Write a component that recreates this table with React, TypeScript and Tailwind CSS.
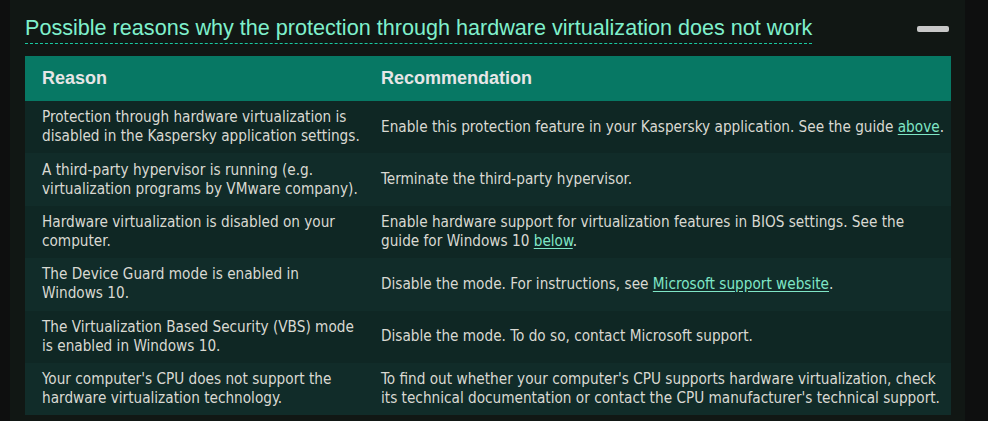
import React from 'react';

type Row = {
  reason: React.ReactNode;
  rec: React.ReactNode;
};

const Link: React.FC<{ children: React.ReactNode }> = ({ children }) => (
  <a href="#" className="text-[#7fe6c6] underline underline-offset-2">
    {children}
  </a>
);

const rows: Row[] = [
  {
    reason: 'Protection through hardware virtualization is disabled in the Kaspersky application settings.',
    rec: (
      <>
        Enable this protection feature in your Kaspersky application. See the guide <Link>above</Link>.
      </>
    ),
  },
  {
    reason: 'A third-party hypervisor is running (e.g. virtualization programs by VMware company).',
    rec: 'Terminate the third-party hypervisor.',
  },
  {
    reason: 'Hardware virtualization is disabled on your computer.',
    rec: (
      <>
        Enable hardware support for virtualization features in BIOS settings. See the
        <br />
        guide for Windows 10 <Link>below</Link>.
      </>
    ),
  },
  {
    reason: (
      <>
        The Device Guard mode is enabled in
        <br />
        Windows 10.
      </>
    ),
    rec: (
      <>
        Disable the mode. For instructions, see <Link>Microsoft support website</Link>.
      </>
    ),
  },
  {
    reason: (
      <>
        The Virtualization Based Security (VBS) mode
        <br />
        is enabled in Windows 10.
      </>
    ),
    rec: 'Disable the mode. To do so, contact Microsoft support.',
  },
  {
    reason: "Your computer's CPU does not support the hardware virtualization technology.",
    rec: "To find out whether your computer's CPU supports hardware virtualization, check its technical documentation or contact the CPU manufacturer's technical support.",
  },
];

const App: React.FC = () => {
  return (
    <div className="flex h-[421px] w-[988px] overflow-hidden bg-[#0e0f0f]">
      {/* left gutter */}
      <div className="w-[10px] shrink-0" />

      {/* content panel */}
      <div className="w-[955px] shrink-0 bg-[#111714] pl-[15px] pr-[14px] pt-[14px]">
        <div className="flex items-start justify-between">
          <h2
            className="border-b border-dashed border-[#19c9a0] pb-[1px] text-[21.6px] leading-[28px] text-[#7ff0cc]"
            style={{ fontFamily: '"Liberation Sans", Arial, sans-serif' }}
          >
            Possible reasons why the protection through hardware virtualization does not work
          </h2>
          <div className="mr-[2px] mt-[12px] h-[6px] w-[32px] rounded-[2px] bg-[#c8c8c8]" />
        </div>

        <table className="mt-[12px] w-full border-collapse">
          <thead>
            <tr
              className="h-[45px] bg-[#077864] text-left text-[18px] font-bold text-[#e6e6e6]"
              style={{ fontFamily: '"Liberation Sans", Arial, sans-serif' }}
            >
              <th className="w-[356px] pl-[17px] align-middle">Reason</th>
              <th className="pl-0 align-middle">Recommendation</th>
            </tr>
          </thead>
          <tbody
            className="text-[15.2px] leading-[19px] text-[#d9d9d2]"
            style={{ fontFamily: '"DejaVu Sans Condensed", "DejaVu Sans", sans-serif' }}
          >
            {rows.map((r, i) => (
              <tr key={i} className={`h-[52.4px] ${i % 2 === 0 ? 'bg-[#0f2724]' : 'bg-[#112c29]'}`}>
                <td className="pl-[17px] pr-[10px] align-middle">{r.reason}</td>
                <td className="pr-[4px] align-middle">{r.rec}</td>
              </tr>
            ))}
          </tbody>
        </table>
      </div>
    </div>
  );
};

export default App;
